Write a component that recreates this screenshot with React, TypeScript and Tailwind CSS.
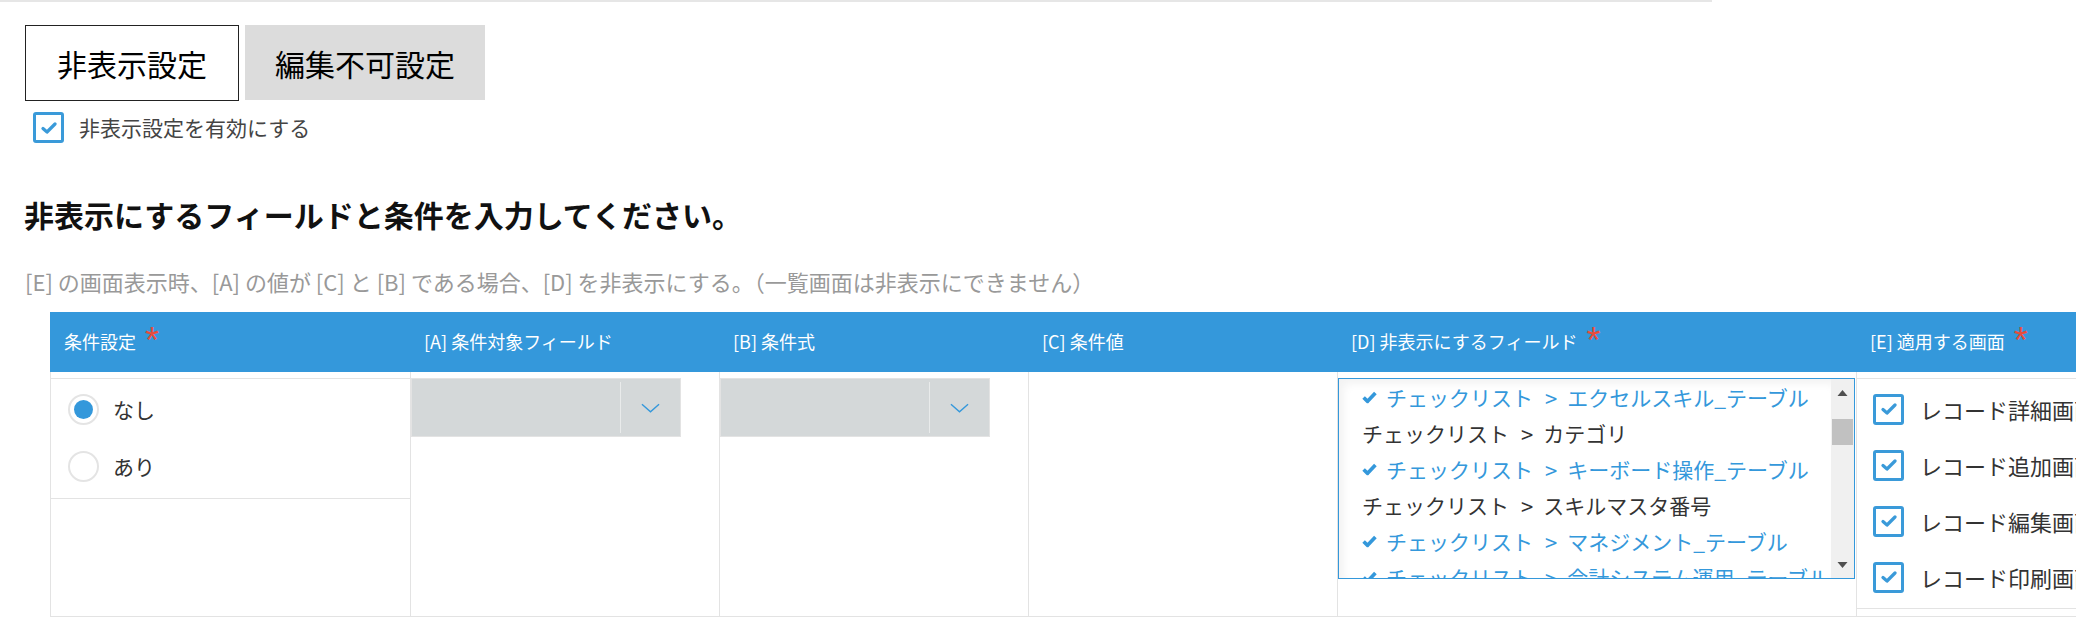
import React from 'react';

const BLUE = '#3498db';

type Item = { label: string; sub: string; checked: boolean };

const fieldItems: Item[] = [
  { label: 'チェックリスト', sub: 'エクセルスキル_テーブル', checked: true },
  { label: 'チェックリスト', sub: 'カテゴリ', checked: false },
  { label: 'チェックリスト', sub: 'キーボード操作_テーブル', checked: true },
  { label: 'チェックリスト', sub: 'スキルマスタ番号', checked: false },
  { label: 'チェックリスト', sub: 'マネジメント_テーブル', checked: true },
  { label: 'チェックリスト', sub: '会計システム運用_テーブル', checked: true },
];

const screens = ['レコード詳細画面', 'レコード追加画面', 'レコード編集画面', 'レコード印刷画面'];

function BoxCheck() {
  return (
    <span className="flex h-[31px] w-[31px] shrink-0 items-center justify-center rounded-[3px] border-[3px] border-[#3a9ad9] bg-white">
      <svg viewBox="0 0 16 12" className="h-[12px] w-[16px]">
        <path d="M2 6.5 L6 10 L14 2" fill="none" stroke="#3a9ad9" strokeWidth="3.2" strokeLinecap="round" strokeLinejoin="round" />
      </svg>
    </span>
  );
}

function Radio({ on }: { on?: boolean }) {
  return (
    <span className="flex h-[31px] w-[31px] shrink-0 items-center justify-center rounded-full border-2 border-[#e4e4e4] bg-white">
      {on && <span className="h-[19px] w-[19px] rounded-full bg-[#3498db]" />}
    </span>
  );
}

function Chevron() {
  return (
    <svg viewBox="0 0 20 10" className="h-[10px] w-[19px]">
      <path d="M1 1 L10 9 L19 1" fill="none" stroke={BLUE} strokeWidth="1.5" />
    </svg>
  );
}

function SelectBox() {
  return (
    <div className="mt-[6px] flex h-[59px] w-[270px] border border-[#e3e3e3] bg-[#d4d8d9]">
      <div className="w-[208px]" />
      <div className="my-[3px] w-px bg-[#e9ebeb]" />
      <div className="flex flex-1 items-center justify-center">
        <Chevron />
      </div>
    </div>
  );
}

function HeadCell({ w, pl, label, req }: { w: string; pl: string; label: string; req?: boolean }) {
  return (
    <div className={`${w} ${pl} flex shrink-0 items-start pt-[20px]`}>
      <span className="text-[18px] leading-[18px] text-white">{label}</span>
      {req && (
        <span className="ml-[9px] mt-[-9px] font-['Liberation_Sans',sans-serif] text-[36px] leading-[36px] text-[#e74c3c]">*</span>
      )}
    </div>
  );
}

export default function App() {
  return (
    <div className="min-h-[641px] w-full overflow-hidden bg-white font-['Noto_Sans_CJK_JP','Noto_Sans',sans-serif] text-[#333]">
      <div className="h-[2px] w-[1712px] bg-[#e6e6e6]" />

      <div className="pl-[25px]">
        {/* tabs */}
        <div className="mt-[23px] flex items-start gap-[6px]">
          <div className="flex h-[76px] w-[214px] items-center justify-center border border-[#222] bg-white text-[30px] leading-none text-black">
            非表示設定
          </div>
          <div className="flex h-[75px] w-[240px] items-center justify-center bg-[#dcdcdc] text-[30px] leading-none text-black">
            編集不可設定
          </div>
        </div>

        <label className="mt-[11px] flex h-[31px] items-center pl-[8px]">
          <BoxCheck />
          <span className="ml-[15px] text-[21px] leading-none text-[#444]">非表示設定を有効にする</span>
        </label>

        <h2 className="ml-[-1px] mt-[56px] text-[30px] font-bold leading-[30px] text-[#111]">
          非表示にするフィールドと条件を入力してください。
        </h2>

        <p className="mt-[41px] text-[22px] leading-[22px] text-[#999]">
          [E] の画面表示時、[A] の値が [C] と [B] である場合、[D] を非表示にする。（一覧画面は非表示にできません）
        </p>

        {/* table */}
        <div className="ml-[25px] mt-[20px] w-max">
          <div className="flex h-[60px] bg-[#3498db]">
            <HeadCell w="w-[361px]" pl="pl-[14px]" label="条件設定" req />
            <HeadCell w="w-[309px]" pl="pl-[13px]" label="[A] 条件対象フィールド" />
            <HeadCell w="w-[309px]" pl="pl-[13px]" label="[B] 条件式" />
            <HeadCell w="w-[309px]" pl="pl-[13px]" label="[C] 条件値" />
            <HeadCell w="w-[519px]" pl="pl-[13px]" label="[D] 非表示にするフィールド" req />
            <HeadCell w="w-[400px]" pl="pl-[13px]" label="[E] 適用する画面" req />
          </div>

          <div className="flex h-[245px] border-b border-l border-[#e3e3e3]">
            {/* condition */}
            <div className="w-[360px] shrink-0 border-r border-[#e3e3e3]">
              <div className="mt-[6px] h-[121px] border-y border-[#e3e3e3] pt-[2px]">
                {[
                  ['なし', true],
                  ['あり', false],
                ].map(([t, on]) => (
                  <div key={t as string} className="flex h-[57px] items-center pl-[17px]">
                    <Radio on={on as boolean} />
                    <span className="ml-[14px] text-[21px] leading-none text-[#333]">{t}</span>
                  </div>
                ))}
              </div>
            </div>

            <div className="w-[309px] shrink-0 border-r border-[#e3e3e3]">
              <SelectBox />
            </div>
            <div className="w-[309px] shrink-0 border-r border-[#e3e3e3]">
              <SelectBox />
            </div>
            <div className="w-[309px] shrink-0 border-r border-[#e3e3e3]" />

            {/* fields to hide */}
            <div className="w-[519px] shrink-0 border-r border-[#e3e3e3]">
              <div className="mt-[6px] flex h-[201px] w-[517px] border border-[#3498db] bg-white">
                <div className="flex-1 overflow-hidden shadow-[inset_5px_5px_8px_rgba(0,0,0,0.05)]">
                  {fieldItems.map((it, i) => (
                    <div
                      key={i}
                      className={`flex h-[36px] items-center whitespace-nowrap pl-[23px] text-[21px] leading-none ${
                        it.checked ? 'text-[#3498db]' : 'text-[#333]'
                      }`}
                    >
                      {it.checked && (
                        <svg viewBox="0 0 14 12" className="mr-[9px] h-[13px] w-[15px] shrink-0">
                          <path d="M1.5 6 L5.2 9.6 L12.5 1.8" fill="none" stroke={BLUE} strokeWidth="3.4" strokeLinejoin="round" />
                        </svg>
                      )}
                      <span>{it.label}</span>
                      <span className="ml-[12px] mr-[10px] text-[22px]">&gt;</span>
                      <span>{it.sub}</span>
                    </div>
                  ))}
                </div>
                <div className="flex w-[23px] shrink-0 flex-col items-center bg-[#f0f0f0]">
                  <svg viewBox="0 0 10 6" className="mt-[11px] h-[6px] w-[11px]">
                    <path d="M0 6 L5 0 L10 6 Z" fill="#505050" />
                  </svg>
                  <div className="mt-[23px] h-[26px] w-[21px] bg-[#c1c1c1]" />
                  <div className="flex-1" />
                  <svg viewBox="0 0 10 6" className="mb-[10px] h-[6px] w-[11px]">
                    <path d="M0 0 L10 0 L5 6 Z" fill="#505050" />
                  </svg>
                </div>
              </div>
            </div>

            {/* screens */}
            <div className="w-[400px] shrink-0">
              <div className="mt-[6px] h-[231px] border-y border-[#e3e3e3] pt-[2px]">
                {screens.map((s) => (
                  <div key={s} className="flex h-[56px] items-center whitespace-nowrap pl-[16px]">
                    <BoxCheck />
                    <span className="ml-[16px] text-[22px] leading-none text-[#333]">{s}</span>
                  </div>
                ))}
              </div>
            </div>
          </div>
        </div>
      </div>
    </div>
  );
}
